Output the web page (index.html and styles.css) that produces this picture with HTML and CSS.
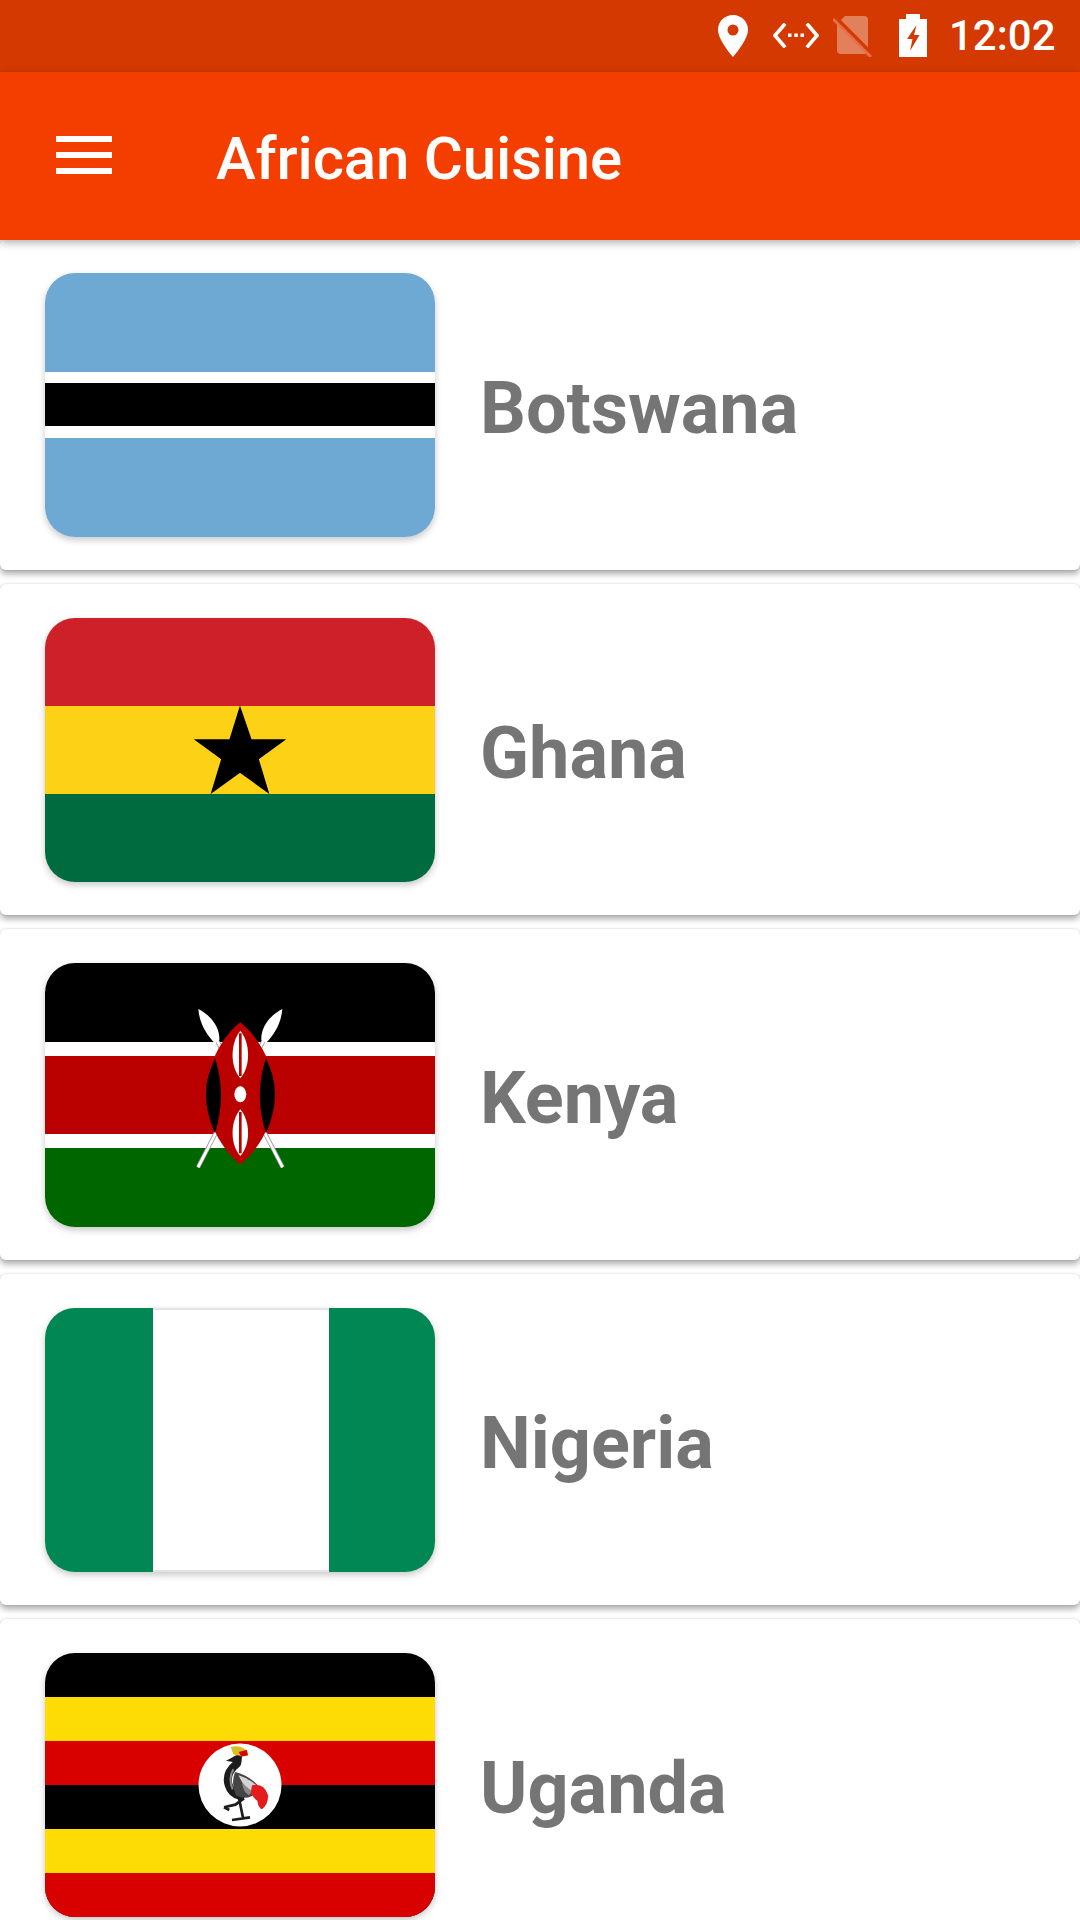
FILE: index.html
```html
<!DOCTYPE html>
<html lang="en">
<head>
<meta charset="utf-8">
<title>African Cuisine</title>
<link rel="stylesheet" href="styles.css">
</head>
<body>
<div class="app">
  <div class="status-bar">
    <svg class="ic-pin" viewBox="0 0 30 42"><path fill="#fff" fill-rule="evenodd" d="M15 0C6.7 0 0 6.6 0 14.8 0 25.5 15 42 15 42s15-16.500 15-27.200C30 6.600 23.300 0 15 0zm0 20.500a5.500 5.500 0 1 1 0-11 5.500 5.500 0 0 1 0 11z"/></svg>
    <svg class="ic-code" viewBox="0 0 46 25"><path fill="none" stroke="#fff" stroke-width="3.600" stroke-linecap="square" d="M11 2 2 12.500 11 23M35 2l9 10.500L35 23"/><path fill="#fff" d="M15 10.500h3.500v3.500H15zM21.300 10.500h3.500v3.500h-3.500zM27.500 10.500H31v3.500h-3.500z"/></svg>
    <svg class="ic-sim" viewBox="0 0 39 41"><path fill="#fff" fill-opacity=".36" d="M12 0H31q4 0 4 4V34q0 4-4 4H8q-4 0-4-4V8z"/><path stroke="#d33900" stroke-width="4" d="M2 1 38 37"/><path stroke="#e5704a" stroke-width="3" d="M0 3 38 41"/></svg>
    <svg class="ic-bat" viewBox="0 0 28 43"><path fill="#fff" fill-rule="evenodd" d="M7 0h14v5h7v38H0V5h7zM17.500 11 8 25h5.500l-2.500 12 9.500-16H15z"/></svg>
    <span class="clock">12:02</span>
  </div>
  <header class="toolbar">
    <div class="menu"><span></span><span></span><span></span></div>
    <h1 class="title">African Cuisine</h1>
  </header>
  <main class="list">
    <article class="card">
      <div class="flag"><svg viewBox="0 0 390 264"><rect width="390" height="264" fill="#6da9d3"/><rect y="99" width="390" height="66" fill="#fff"/><rect y="110" width="390" height="43" fill="#000"/></svg></div>
      <h2 class="name">Botswana</h2>
    </article>
    <article class="card">
      <div class="flag"><svg viewBox="0 0 390 264"><rect width="390" height="88" fill="#ce2028"/><rect y="88" width="390" height="88" fill="#fcd116"/><rect y="176" width="390" height="88" fill="#006b3f"/><path fill="#000" stroke="#000" stroke-width="1.500" d="M195 90 206 122H239L213 141 223 174 195 154 167 174 177 141 151 122H185z"/></svg></div>
      <h2 class="name">Ghana</h2>
    </article>
    <article class="card">
      <div class="flag"><svg viewBox="0 0 390 264"><rect width="390" height="264" fill="#fff"/><rect width="390" height="79" fill="#000"/><rect y="93" width="390" height="78" fill="#bb0000"/><rect y="185" width="390" height="79" fill="#006600"/>
        <g transform="translate(115 27) scale(.3333)">
          <path fill="none" stroke="#999" stroke-width="13" d="M170 150 368 532M312 150 114 532"/>
          <path fill="none" stroke="#fff" stroke-width="8" d="M170 150 368 532M312 150 114 532"/>
          <path fill="#fff" d="M115 57C150 75 180 110 178 150L165 160C135 130 118 95 115 57z"/>
          <path fill="#fff" d="M367 57C332 75 302 110 304 150L317 160C347 130 364 95 367 57z"/>
          <path fill="#bb0000" d="M241 97C185 140 138 230 138 312 138 392 185 480 241 523 297 480 345 392 345 312 345 230 297 140 241 97z"/>
          <path fill="#000" d="M165 205Q138 260 138 312 138 370 165 430 201 315 165 205z"/>
          <path fill="#000" d="M318 205Q345 260 345 312 345 370 318 430 281 315 318 205z"/>
          <path fill="#fff" d="M241 122C210 160 210 230 241 265 272 230 272 160 241 122z"/>
          <path fill="#fff" d="M241 358C210 395 210 465 241 498 272 465 272 395 241 358z"/>
          <path fill="#bb0000" d="M237 130h8v128h-8zM237 366h8v124h-8z"/>
          <ellipse cx="241" cy="313" rx="18" ry="24" fill="#fff"/>
        </g>
      </svg></div>
      <h2 class="name">Kenya</h2>
    </article>
    <article class="card">
      <div class="flag"><svg viewBox="0 0 390 264"><rect width="390" height="264" fill="#008753"/><rect x="108" width="176" height="264" fill="#fff"/><path fill="none" stroke="#e4e4e4" stroke-width="2" d="M108 1H284M108 263H284"/></svg></div>
      <h2 class="name">Nigeria</h2>
    </article>
    <article class="card">
      <div class="flag"><svg viewBox="0 0 390 264"><rect width="390" height="264" fill="#000"/><rect y="44" width="390" height="44" fill="#fcdc04"/><rect y="88" width="390" height="44" fill="#d90000"/><rect y="176" width="390" height="44" fill="#fcdc04"/><rect y="220" width="390" height="44" fill="#d90000"/>
        <circle cx="195" cy="132" r="41.500" fill="#fff"/>
        <g class="crane" transform="translate(135 77) scale(.3333)">
          <path fill="#d8c020" d="M152 52Q175 42 202 62L204 76 176 80 160 72z"/>
          <path fill="#d90000" d="M176 66 200 60 204 76 184 80z"/>
          <path fill="#1c1c1c" d="M138 92 158 82Q170 70 186 80L184 100 174 112 158 96z"/>
          <path fill="none" stroke="#1c1c1c" stroke-width="24" stroke-linecap="round" d="M170 102Q135 130 146 165 154 192 182 198"/>
          <path fill="none" stroke="#8a8a8a" stroke-width="6" d="M160 118Q144 145 158 178"/>
          <path fill="#444" d="M165 126Q205 136 232 164L216 198Q190 210 168 196 152 165 165 126z"/>
          <path fill="#d4d4d4" d="M176 136Q208 146 232 168L218 186Q190 172 176 136z"/>
          <path fill="#888" d="M186 158 218 186 206 196Q190 186 186 158z"/>
          <path fill="#e51c1c" d="M216 166Q252 158 264 195 266 222 246 238 234 232 232 212 222 206 212 190z"/>
          <path fill="none" stroke="#1c1c1c" stroke-width="8" d="M176 200 190 268M156 270 210 262M192 205 166 224 132 232M132 232 148 240"/>
        </g>
      </svg></div>
      <h2 class="name">Uganda</h2>
    </article>
  </main>
</div>
</body>
</html>
```
FILE: styles.css
```css
* { box-sizing: border-box; }
html, body { margin: 0; padding: 0; }
body { width: 1080px; height: 1920px; overflow: hidden; background: #fff; font-family: Roboto, "Liberation Sans", sans-serif; }
.app { width: 1080px; height: 1920px; overflow: hidden; display: flex; flex-direction: column; }

.status-bar { height: 72px; flex: none; background: #d33900; display: flex; align-items: flex-start; padding-left: 718px; color: #fff; }
.status-bar svg { display: block; flex: none; }
.ic-pin { width: 30px; height: 42px; margin-top: 15px; }
.ic-code { width: 46px; height: 25px; margin-top: 23px; margin-left: 25px; }
.ic-sim { width: 39px; height: 41px; margin-top: 16px; margin-left: 14px; }
.ic-bat { width: 28px; height: 43px; margin-top: 14px; margin-left: 27px; }
.clock { margin-left: 22px; font-size: 42px; line-height: 72px; font-weight: 500; white-space: nowrap; }

.toolbar { height: 168px; flex: none; background: #f43e00; display: flex; align-items: center; padding-left: 56px; position: relative; z-index: 2; box-shadow: 0 3px 8px rgba(0,0,0,.3); }
.menu { width: 56px; display: flex; flex-direction: column; gap: 10px; margin-top: -2px; }
.menu span { display: block; height: 6px; background: #fff; }
.title { margin: 6px 0 0 104px; font-size: 60px; line-height: 72px; font-weight: 500; letter-spacing: -.2px; color: #fff; white-space: nowrap; }

.list { flex: none; margin-top: -1px; display: flex; flex-direction: column; gap: 14px; background: #fff; }
.card { height: 331px; flex: none; background: #fff; border-radius: 6px; display: flex; align-items: flex-start; padding: 34px 0 0 45px; box-shadow: 0 4px 6px rgba(0,0,0,.33), 0 0 2px rgba(0,0,0,.18); }
.flag { width: 390px; height: 264px; flex: none; border-radius: 30px; overflow: hidden; box-shadow: 0 3px 7px rgba(0,0,0,.22); }
.flag svg { display: block; width: 390px; height: 264px; }
.crane { filter: blur(.4px); }
.name { margin: 4px 0 0 45px; font-size: 72px; line-height: 264px; font-weight: 700; color: #757575; white-space: nowrap; }
```
